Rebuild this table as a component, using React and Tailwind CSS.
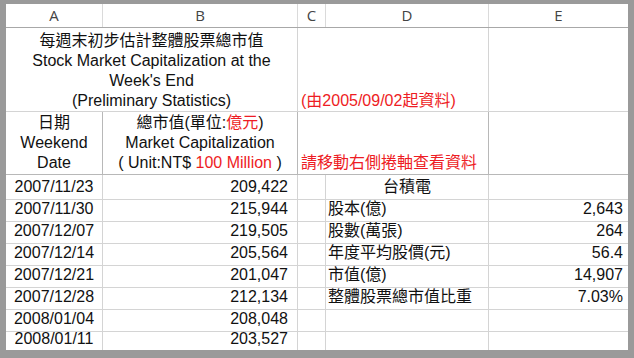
const FONT = { fontFamily: '"Liberation Sans", Arial, "Noto Sans CJK TC", sans-serif' };

const dataRows = [
  ["2007/11/23", "209,422", "台積電", "", 22, "center"],
  ["2007/11/30", "215,944", "股本(億)", "2,643", 22],
  ["2007/12/07", "219,505", "股數(萬張)", "264", 22],
  ["2007/12/14", "205,564", "年度平均股價(元)", "56.4", 22],
  ["2007/12/21", "201,047", "市值(億)", "14,907", 22],
  ["2007/12/28", "212,134", "整體股票總市值比重", "7.03%", 22],
  ["2008/01/04", "208,048", "", "", 20],
  ["2008/01/11", "203,527", "", "", 21],
  ["2008/01/18", "196,873", "", "", 22],
];

function Row({ d, last }) {
  const [date, val, label, v2, h, align] = d;
  const cell = "border-r border-b border-[#d4d4d4] flex items-center";
  return (
    <div className="grid grid-cols-[97px_195px_28px_163px_139px]" style={{ height: h }}>
      <div className={`${cell} justify-center`}>{date}</div>
      <div className={`${cell} justify-end pr-[9px]`}>{val}</div>
      <div className={cell}></div>
      <div className={`${cell} ${align === "center" ? "justify-center" : "pl-[2px]"} whitespace-nowrap`}>{label}</div>
      <div className="border-b border-[#d4d4d4] flex items-center justify-end pr-[5px]">{v2}</div>
    </div>
  );
}

export default function App() {
  const red = "text-[#ee1c24]";
  return (
    <div className="w-[634px] h-[358px] bg-[#9a9a9a] pt-[4px] pl-[6px] pr-[6px] pb-[8px] overflow-hidden">
      <div className="w-full h-full bg-white overflow-hidden text-[16px] text-[#111]" style={FONT}>
        {/* column header */}
        <div
          className="grid grid-cols-[97px_195px_28px_163px_139px] h-[24px] border-b border-[#a8a8a8] text-[15px] text-[#444]"
          style={{ fontFamily: '"Open Sans", "Noto Sans", sans-serif' }}
        >
          {["A", "B", "C", "D", "E"].map((c, i) => (
            <div key={c} className={`flex items-center justify-center ${i < 4 ? "border-r border-[#dadada]" : ""}`}>
              {c}
            </div>
          ))}
        </div>
        {/* title row */}
        <div className="grid grid-cols-[97px_195px_28px_163px_139px] h-[84px]">
          <div className="col-span-2 border-r border-b border-[#d4d4d4] flex flex-col justify-end items-center leading-[20px] text-center">
            <div>每週末初步估計整體股票總市值</div>
            <div>Stock Market Capitalization at the</div>
            <div>Week's End</div>
            <div>(Preliminary Statistics)</div>
          </div>
          <div className={`col-span-2 border-r border-b border-[#d4d4d4] flex items-end pl-[3px] leading-[20px] whitespace-nowrap ${red}`}>
            (由2005/09/02起資料)
          </div>
          <div className="border-b border-[#d4d4d4]"></div>
        </div>
        {/* header row 2 */}
        <div className="grid grid-cols-[97px_195px_28px_163px_139px] h-[63px]">
          <div className="border-r border-b border-[#b8b8b8] flex flex-col justify-end items-center leading-[20px] pb-[1px]">
            <div>日期</div>
            <div>Weekend</div>
            <div>Date</div>
          </div>
          <div className="border-r border-b border-[#b8b8b8] flex flex-col justify-end items-center leading-[20px] pb-[1px] whitespace-nowrap">
            <div>
              總市值(單位:<span className={red}>億元</span>)
            </div>
            <div>Market Capitalization</div>
            <div>
              ( Unit:NT$ <span className={red}>100 Million</span> )
            </div>
          </div>
          <div className={`col-span-2 border-r border-b border-[#b8b8b8] flex items-end pl-[3px] pb-[1px] leading-[20px] whitespace-nowrap ${red}`}>
            請移動右側捲軸查看資料
          </div>
          <div className="border-b border-[#b8b8b8]"></div>
        </div>
        {dataRows.map((d, i) => (
          <Row key={i} d={d} />
        ))}
      </div>
    </div>
  );
}
